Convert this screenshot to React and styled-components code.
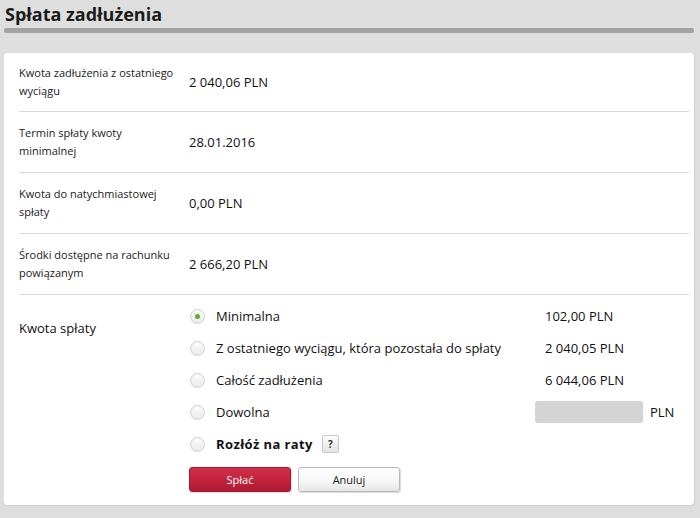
import React, { useState } from 'react';
import styled, { createGlobalStyle } from 'styled-components';

const GlobalStyle = createGlobalStyle`
  html, body {
    margin: 0;
    padding: 0;
    background: #dedede;
    font-family: "Open Sans", "DejaVu Sans", sans-serif;
    color: #111;
  }
`;

const Page = styled.div`
  width: 700px;
  height: 518px;
  padding: 0 6px 0 4px;
  box-sizing: border-box;
`;

const Title = styled.h1`
  margin: 0;
  padding: 2px 0 0 1px;
  font-size: 18px;
  font-weight: 700;
  line-height: 24px;
  color: #1a1a1a;
`;

const TitleBar = styled.div`
  height: 5px;
  margin-top: 2px;
  background: #a3a3a3;
  border-radius: 2px;
`;

const Panel = styled.div`
  margin-top: 20px;
  background: #fff;
  border-radius: 4px;
  padding: 0 0 13px 15px;
  box-shadow: 1px 1px 1px rgba(0, 0, 0, 0.06);
`;

const InfoRow = styled.div`
  display: flex;
  align-items: center;
  box-sizing: border-box;
  height: ${p => (p.first ? '59px' : '61px')};
  border-bottom: 1px solid #d9d9d9;
  margin-right: 5px;
`;

const InfoLabel = styled.div`
  width: 170px;
  font-size: 11px;
  line-height: 18px;
  color: #222;
`;

const InfoValue = styled.div`
  font-size: 13px;
  color: #111;
`;

const PaySection = styled.div`
  display: flex;
  padding-top: 5px;
`;

const PayLabel = styled.div`
  width: 170px;
  font-size: 13px;
  padding-top: 19px;
`;

const Options = styled.div`
  flex: 1;
  display: flex;
  flex-direction: column;
`;

const Option = styled.label`
  display: flex;
  align-items: center;
  height: 32px;
  font-size: 13px;
  cursor: pointer;
`;

const Radio = styled.span`
  width: 13px;
  height: 13px;
  border-radius: 50%;
  border: 1px solid #cfcfcf;
  background: linear-gradient(#fafafa, #ececec);
  margin: 0 11px 0 1px;
  display: flex;
  align-items: center;
  justify-content: center;
  flex-shrink: 0;

  &::after {
    content: '';
    width: 5px;
    height: 5px;
    border-radius: 50%;
    background: ${p => (p.checked ? '#6aa82b' : 'transparent')};
  }
`;

const OptionText = styled.span`
  flex: 1;
  font-weight: ${p => (p.bold ? 700 : 400)};
  letter-spacing: ${p => (p.bold ? '0.4px' : '0')};
  display: flex;
  align-items: center;
`;

const Amount = styled.span`
  width: 149px;
  color: #111;
`;

const AmountInput = styled.input`
  width: 108px;
  height: 22px;
  box-sizing: border-box;
  border: none;
  border-radius: 3px;
  background: #d4d4d4;
  margin-right: 7px;
  outline: none;
`;

const Currency = styled.span`
  width: 44px;
`;

const HelpButton = styled.span`
  display: inline-flex;
  align-items: center;
  justify-content: center;
  width: 15px;
  height: 16px;
  margin-left: 9px;
  border: 1px solid #c6c6c6;
  border-radius: 2px;
  background: linear-gradient(#fdfdfd, #e4e4e4);
  font-size: 10px;
  font-weight: 700;
  letter-spacing: 0;
  color: #333;
`;

const Buttons = styled.div`
  display: flex;
  gap: 7px;
  margin-top: 7px;
`;

const Button = styled.button`
  width: 102px;
  height: 25px;
  border-radius: 3px;
  font-family: "Open Sans", "DejaVu Sans", sans-serif;
  font-size: 11px;
  cursor: pointer;
  color: ${p => (p.primary ? '#fff' : '#222')};
  border: 1px solid ${p => (p.primary ? '#a81a30' : '#b9b9b9')};
  background: ${p =>
    p.primary
      ? 'linear-gradient(#d1304a, #c0203a 60%, #b01a33)'
      : 'linear-gradient(#ffffff, #f6f6f6 60%, #e6e6e6)'};
  box-shadow: 1px 1px 1px rgba(0, 0, 0, 0.15);
`;

const info = [
  [['Kwota zadłużenia z ostatniego', 'wyciągu'], '2 040,06 PLN'],
  [['Termin spłaty kwoty', 'minimalnej'], '28.01.2016'],
  [['Kwota do natychmiastowej', 'spłaty'], '0,00 PLN'],
  [['Środki dostępne na rachunku', 'powiązanym'], '2 666,20 PLN'],
];

const options = [
  { id: 'min', text: 'Minimalna', amount: '102,00 PLN' },
  { id: 'last', text: 'Z ostatniego wyciągu, która pozostała do spłaty', amount: '2 040,05 PLN' },
  { id: 'all', text: 'Całość zadłużenia', amount: '6 044,06 PLN' },
  { id: 'any', text: 'Dowolna', input: true },
  { id: 'raty', text: 'Rozłóż na raty', bold: true, help: true },
];

export default function App() {
  const [selected, setSelected] = useState('min');

  return (
    <Page>
      <GlobalStyle />
      <Title>Spłata zadłużenia</Title>
      <TitleBar />
      <Panel>
        {info.map(([label, value], i) => (
          <InfoRow key={label[0]} first={i === 0}>
            <InfoLabel>
              {label[0]}
              <br />
              {label[1]}
            </InfoLabel>
            <InfoValue>{value}</InfoValue>
          </InfoRow>
        ))}
        <PaySection>
          <PayLabel>Kwota spłaty</PayLabel>
          <Options>
            {options.map(o => (
              <Option key={o.id} onClick={() => setSelected(o.id)}>
                <Radio checked={selected === o.id} />
                <OptionText bold={o.bold}>
                  {o.text}
                  {o.help && <HelpButton>?</HelpButton>}
                </OptionText>
                {o.amount && <Amount>{o.amount}</Amount>}
                {o.input && (
                  <>
                    <AmountInput type="text" />
                    <Currency>PLN</Currency>
                  </>
                )}
              </Option>
            ))}
            <Buttons>
              <Button primary>Spłać</Button>
              <Button>Anuluj</Button>
            </Buttons>
          </Options>
        </PaySection>
      </Panel>
    </Page>
  );
}
